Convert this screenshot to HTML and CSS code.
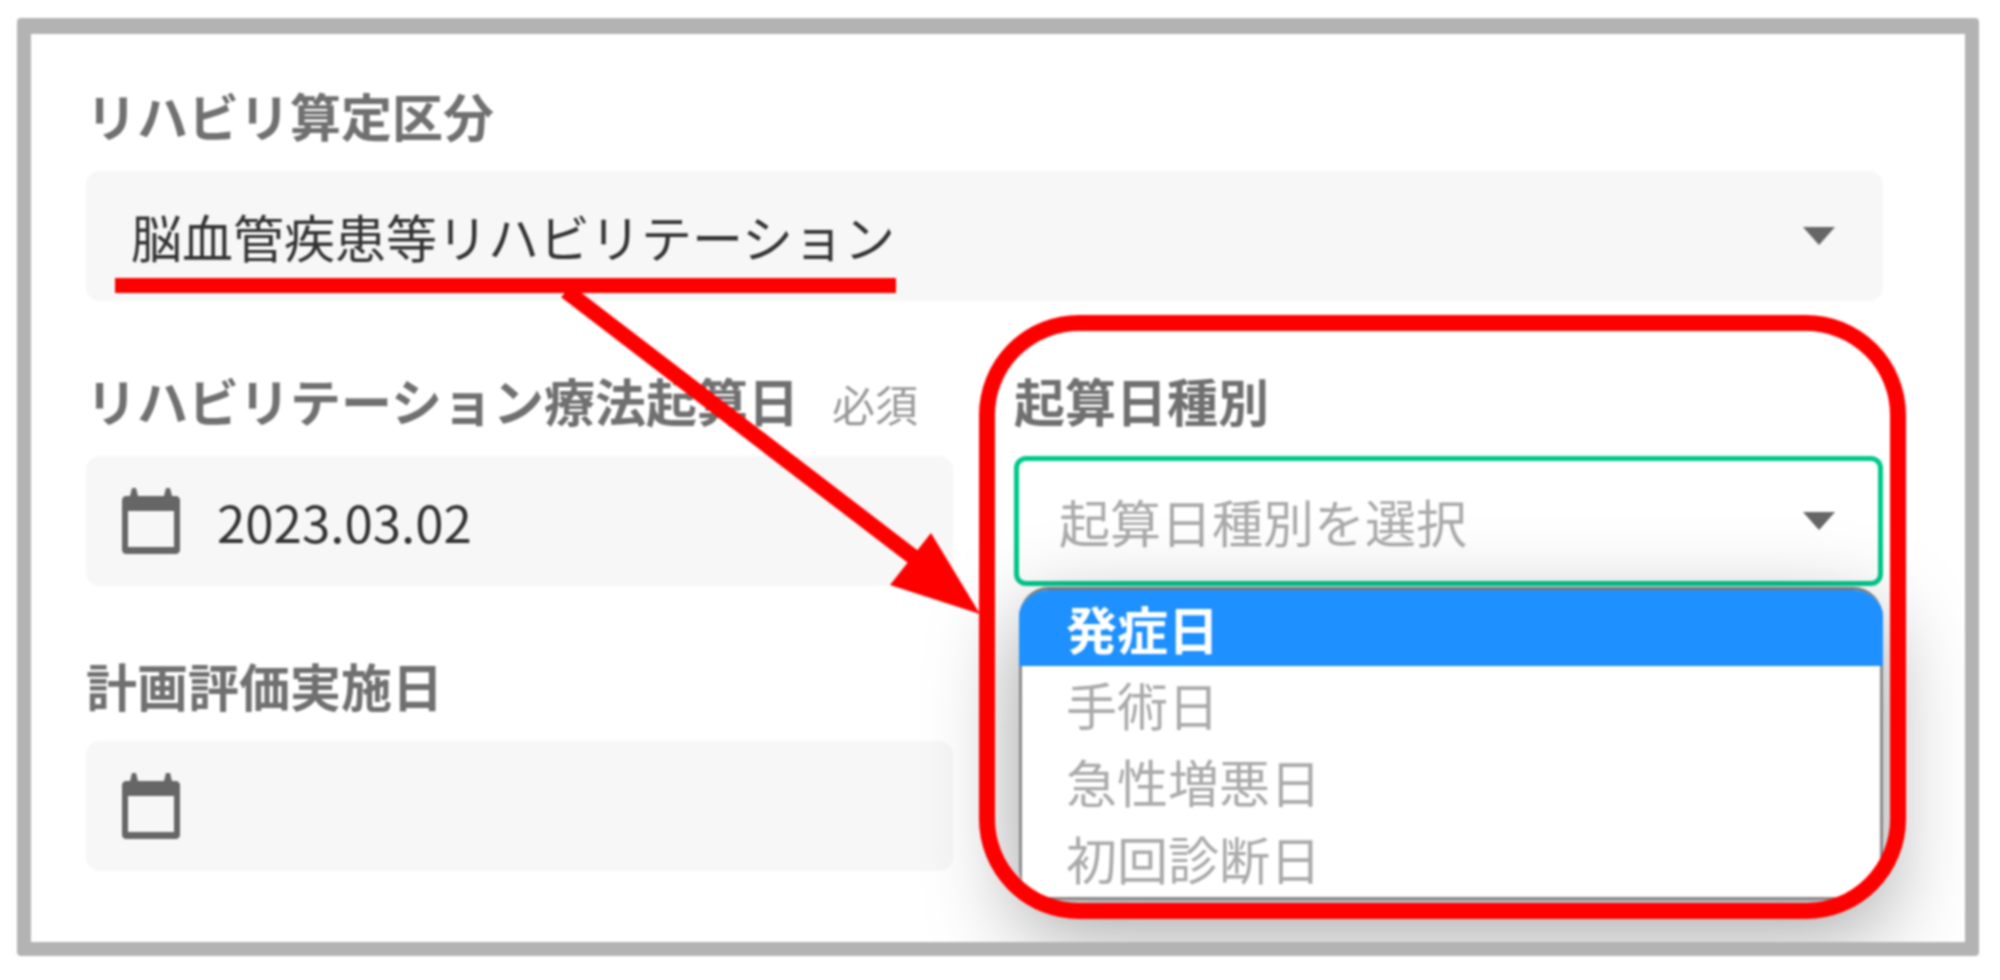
FILE: index.html
```html
<!DOCTYPE html>
<html lang="ja">
<head>
  <meta charset="UTF-8" />
  <meta name="viewport" content="width=device-width, initial-scale=1.0" />
  <title>リハビリ算定区分</title>
  <link rel="stylesheet" href="styles.css">
</head>
<body>
  <div class="frame">
    <div class="form">
      <div class="group wide">
        <label class="label">リハビリ算定区分</label>
        <div class="field select-field">
          <span class="value">脳血管疾患等リハビリテーション</span>
          <span class="caret"></span>
        </div>
      </div>

      <div class="group">
        <label class="label">リハビリテーション療法起算日<span class="required">必須</span></label>
        <div class="field date-field">
          <svg class="calendar" viewBox="0 0 58 66"><path fill-rule="evenodd" d="M10 0h4l2 8h26l2-8h4l2 8h4c2 0 4 2 4 4v50c0 2-2 4-4 4H4c-2 0-4-2-4-4V12c0-2 2-4 4-4h4zM6 23v36h46V23z"/></svg>
          <span class="value">2023.03.02</span>
        </div>
      </div>

      <div class="group">
        <label class="label">起算日種別</label>
        <div class="select-wrap">
          <div class="field select-field focused">
            <span class="placeholder">起算日種別を選択</span>
            <span class="caret"></span>
          </div>
          <ul class="menu">
            <li class="selected">発症日</li>
            <li>手術日</li>
            <li>急性増悪日</li>
            <li>初回診断日</li>
          </ul>
        </div>
      </div>

      <div class="group">
        <label class="label">計画評価実施日</label>
        <div class="field date-field">
          <svg class="calendar" viewBox="0 0 58 66"><path fill-rule="evenodd" d="M10 0h4l2 8h26l2-8h4l2 8h4c2 0 4 2 4 4v50c0 2-2 4-4 4H4c-2 0-4-2-4-4V12c0-2 2-4 4-4h4zM6 23v36h46V23z"/></svg>
        </div>
      </div>
    </div>

    <svg class="markup" viewBox="0 0 2000 980">
      <rect x="115" y="278" width="781" height="15" fill="#f00"/>
      <line x1="566" y1="291" x2="925" y2="566" stroke="#f00" stroke-width="16"/>
      <polygon points="980,614 890,585 931,533" fill="#f00"/>
      <rect x="987" y="323" width="911" height="588" rx="92" fill="none" stroke="#f00" stroke-width="16"/>
    </svg>
  </div>
</body>
</html>
```

FILE: styles.css
```css
body {
  margin: 0;
  background-color: #fff;
  font-family: "Noto Sans CJK JP", "Noto Sans", sans-serif;
  padding: 18px 21px 22px 17px;
}

.frame {
  position: relative;
  height: 908px;
  border: 14px solid #b3b3b3;
  border-top-width: 16px;
  border-radius: 4px;
  overflow: hidden;
  background-color: #fff;
  filter: blur(0.8px);
}

.form {
  display: grid;
  grid-template-columns: 867px 869px;
  column-gap: 61px;
  row-gap: 72px;
  padding: 54px 0 0 55px;
}

.wide {
  grid-column: 1 / 3;
}

.label {
  display: block;
  height: 60px;
  line-height: 54px;
  margin-bottom: 23px;
  font-size: 51px;
  font-weight: bold;
  color: #707070;
  white-space: nowrap;
}

.required {
  margin-left: 33px;
  font-size: 43px;
  font-weight: normal;
  color: #999;
}

.field {
  display: flex;
  align-items: center;
  box-sizing: border-box;
  height: 130px;
  background-color: #f7f7f7;
  border-radius: 14px;
  font-size: 51px;
  color: #333;
}

.select-field {
  justify-content: space-between;
  padding: 0 48px 0 45px;
}

.date-field {
  gap: 37px;
  padding-left: 36px;
}

.calendar {
  width: 58px;
  height: 66px;
  fill: #666;
}

.caret {
  width: 0;
  height: 0;
  border-left: 16px solid transparent;
  border-right: 16px solid transparent;
  border-top: 18px solid #666;
}

.select-wrap {
  position: relative;
}

.focused {
  background-color: #fff;
  border: 5px solid #00c98c;
  border-radius: 12px;
  padding: 0 43px 0 40px;
}

.placeholder {
  color: #aaa;
}

.menu {
  position: absolute;
  top: 131px;
  left: 5px;
  right: 0;
  box-sizing: border-box;
  height: 313px;
  margin: 0;
  padding: 0;
  list-style: none;
  background-color: #fff;
  border-top: 3px solid #777;
  border-bottom: 3px solid #8a8a8a;
  border-radius: 30px;
  overflow: hidden;
  box-shadow: 0 30px 90px rgba(0, 0, 0, 0.38);
  font-size: 51px;
  color: #aaa;
}

.menu li {
  box-sizing: border-box;
  height: 77px;
  line-height: 77px;
  padding-left: 44px;
  border-left: 3px solid #8a8a8a;
  border-right: 3px solid #8a8a8a;
}

.menu .selected {
  height: 76px;
  line-height: 76px;
  background-color: #1e90ff;
  border-color: #1e90ff;
  color: #fff;
  font-weight: bold;
}

.markup {
  position: absolute;
  top: -34px;
  left: -31px;
  width: 2000px;
  height: 980px;
}
```
